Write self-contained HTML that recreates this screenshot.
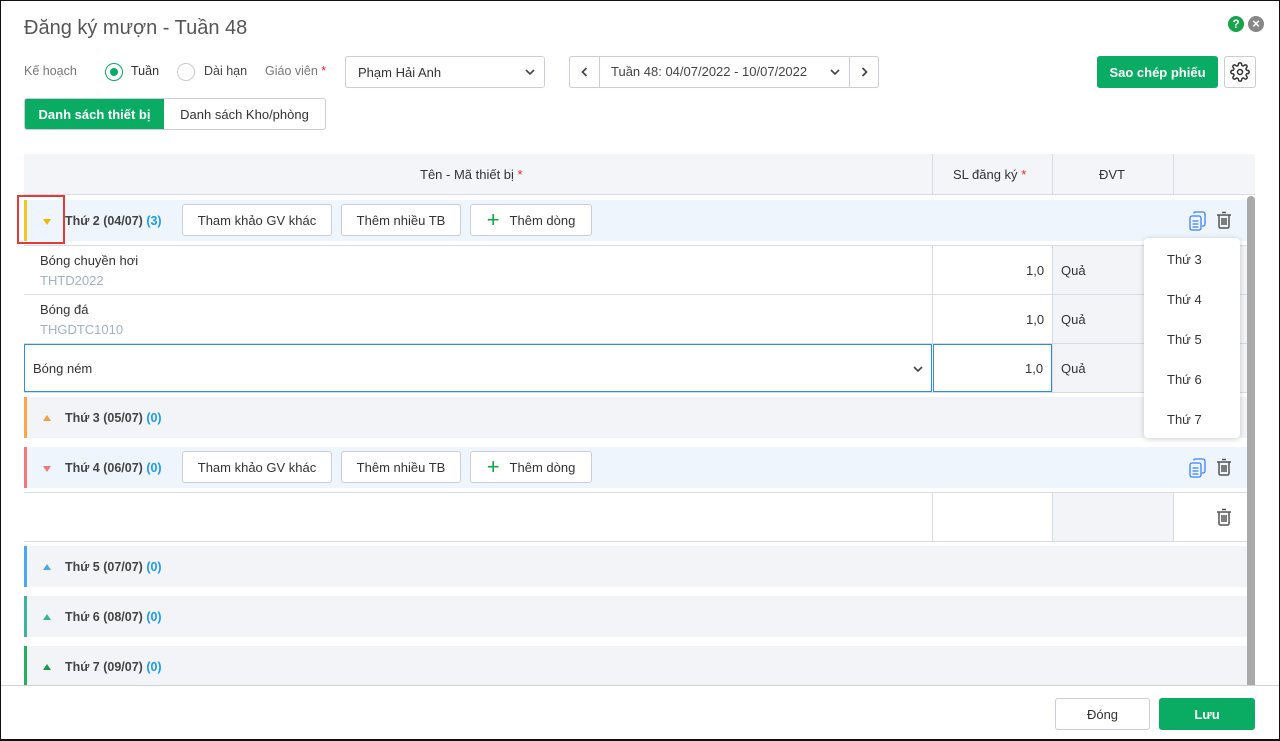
<!DOCTYPE html>
<html><head><meta charset="utf-8"><style>
*{box-sizing:border-box;margin:0;padding:0}
body{width:1280px;height:741px;overflow:hidden;background:#fff;font-family:"Liberation Sans",sans-serif;font-size:13px;color:#333;position:relative}
.frame{position:absolute;left:0;top:0;width:1280px;height:741px;border:1px solid #111;border-bottom-width:2px}
.a{position:absolute}
.btn{position:absolute;border:1px solid #ccd;border-radius:3px;background:#fff;display:flex;align-items:center;justify-content:center;color:#333}
.grp{position:absolute;left:24px;width:1223px;height:41px;display:flex;align-items:center}
.grp .t{font-weight:bold;color:#444;font-size:12.5px;margin-left:14px}
.grp .t b{color:#1e9be8;font-weight:bold}
.bar{position:absolute;left:0;top:0;bottom:0;width:3px}
.tri{width:0;height:0;border-left:4px solid transparent;border-right:4px solid transparent;margin-left:19px}
.hl{position:absolute;left:24px;width:1223px;height:1px;background:#d8dbe6}
.sm{font-size:12.5px}
</style></head><body>
<div class="frame"></div>
<div class="a" style="left:24px;top:17px;font-size:20px;color:#555">Đăng ký mượn - Tuần 48</div>
<div class="a" style="left:1228px;top:16px;width:16px;height:16px;border-radius:50%;background:#16a34a;color:#fff;font-size:12px;font-weight:bold;text-align:center;line-height:16px">?</div>
<div class="a" style="left:1248px;top:16px;width:16px;height:16px;border-radius:50%;background:#888;color:#fff;font-size:13px;font-weight:bold;text-align:center;line-height:16px">×</div>

<div class="a sm" style="left:24px;top:64px;color:#777">Kế hoạch</div>
<div class="a" style="left:105px;top:63px;width:18px;height:18px;border:1px solid #0aab62;border-radius:50%"><div style="margin:4px;width:8px;height:8px;border-radius:50%;background:#0aab62"></div></div>
<div class="a sm" style="left:131px;top:64px">Tuần</div>
<div class="a" style="left:177px;top:63px;width:18px;height:18px;border:1px solid #ccc;border-radius:50%"></div>
<div class="a sm" style="left:204px;top:64px;color:#444">Dài hạn</div>
<div class="a sm" style="left:265px;top:64px;color:#777">Giáo viên <span style="color:#e22">*</span></div>
<div class="btn" style="left:345px;top:56px;width:200px;height:32px;justify-content:flex-start;padding-left:12px">Phạm Hải Anh<svg style="position:absolute;right:9px;top:12px" width="10" height="7" viewBox="0 0 10 7"><path d="M1 1l4 4 4-4" fill="none" stroke="#444" stroke-width="1.6"/></svg></div>
<div class="btn" style="left:569px;top:56px;width:310px;height:32px"></div>
<div class="a" style="left:599px;top:57px;width:1px;height:30px;background:#ccd"></div>
<div class="a" style="left:849px;top:57px;width:1px;height:30px;background:#ccd"></div>
<svg class="a" style="left:581px;top:67px" width="7" height="10" viewBox="0 0 7 10"><path d="M5.5 1l-4 4 4 4" fill="none" stroke="#444" stroke-width="1.7"/></svg>
<svg class="a" style="left:861px;top:67px" width="7" height="10" viewBox="0 0 7 10"><path d="M1.5 1l4 4-4 4" fill="none" stroke="#444" stroke-width="1.7"/></svg>
<div class="a" style="left:611px;top:64px;color:#444">Tuần 48: 04/07/2022 - 10/07/2022</div>
<svg class="a" style="left:830px;top:69px" width="10" height="7" viewBox="0 0 10 7"><path d="M1 1l4 4 4-4" fill="none" stroke="#444" stroke-width="1.6"/></svg>
<div class="a" style="left:1097px;top:56px;width:121px;height:32px;background:#0aab62;border-radius:3px;color:#fff;font-weight:bold;display:flex;align-items:center;justify-content:center">Sao chép phiếu</div>
<div class="btn" style="left:1224px;top:56px;width:32px;height:32px"><svg width="20" height="20" viewBox="0 0 24 24" fill="none" stroke="#333" stroke-width="1.8"><circle cx="12" cy="12" r="3"/><path d="M19.4 15a1.7 1.7 0 0 0 .3 1.8l.1.1a2 2 0 1 1-2.8 2.8l-.1-.1a1.7 1.7 0 0 0-1.8-.3 1.7 1.7 0 0 0-1 1.5V21a2 2 0 1 1-4 0v-.1a1.7 1.7 0 0 0-1.100-1.500 1.7 1.7 0 0 0-1.8.3l-.1.1a2 2 0 1 1-2.800-2.800l.1-.1a1.7 1.7 0 0 0 .3-1.800 1.7 1.7 0 0 0-1.500-1H3a2 2 0 1 1 0-4h.1a1.7 1.7 0 0 0 1.5-1.100 1.7 1.7 0 0 0-.3-1.800l-.1-.1a2 2 0 1 1 2.800-2.800l.1.1a1.7 1.7 0 0 0 1.800.3H9a1.7 1.7 0 0 0 1-1.500V3a2 2 0 1 1 4 0v.1a1.7 1.7 0 0 0 1 1.500 1.7 1.7 0 0 0 1.800-.3l.1-.1a2 2 0 1 1 2.800 2.800l-.1.1a1.7 1.7 0 0 0-.3 1.800V9a1.7 1.7 0 0 0 1.500 1H21a2 2 0 1 1 0 4h-.1a1.7 1.7 0 0 0-1.500 1z"/></svg></div>

<div class="a" style="left:24px;top:98px;width:302px;height:32px;border:1px solid #ccd;border-radius:3px;overflow:hidden;display:flex">
<div style="width:139px;background:#0aab62;color:#fff;font-weight:bold;display:flex;align-items:center;justify-content:center">Danh sách thiết bị</div>
<div style="flex:1;display:flex;align-items:center;justify-content:center;color:#333">Danh sách Kho/phòng</div></div>

<div class="a" style="left:24px;top:154px;width:1231px;height:41px;background:#f3f5f9;border-bottom:1px solid #d8dbe6"></div>
<div class="a" style="left:932px;top:154px;width:1px;height:40px;background:#d8dbe6"></div>
<div class="a" style="left:1052px;top:154px;width:1px;height:40px;background:#d8dbe6"></div>
<div class="a" style="left:1173px;top:154px;width:1px;height:40px;background:#d8dbe6"></div>
<div class="a" style="left:420px;top:167px">Tên - Mã thiết bị <span style="color:#e22">*</span></div>
<div class="a" style="left:953px;top:167px">SL đăng ký <span style="color:#e22">*</span></div>
<div class="a" style="left:1099px;top:167px">ĐVT</div>
<div class="a" style="left:1247px;top:196px;width:8px;height:489px;background:#a9a9a9;border-radius:4px 4px 0 0"></div>

<div class="grp" style="top:200px;background:#eef5fc"><div class="bar" style="background:#f3c623"></div><div class="tri" style="border-top:6px solid #f5b400;margin-top:2px"></div><div class="t">Thứ 2 (04/07) <b>(3)</b></div></div>
<div class="a" style="left:17px;top:195px;width:48px;height:49px;border:2px solid #e53935"></div>
<div class="btn" style="left:182px;top:204px;width:150px;height:32px">Tham khảo GV khác</div>
<div class="btn" style="left:341px;top:204px;width:120px;height:32px">Thêm nhiều TB</div>
<div class="btn" style="left:470px;top:204px;width:122px;height:32px"><span style="color:#16a34a;font-size:22px;margin-right:10px;line-height:1">+</span>Thêm dòng</div>
<svg class="a" style="left:1189px;top:211px" width="18" height="20" viewBox="0 0 18 20" fill="none" stroke="#3b82f6" stroke-width="1.3"><rect x="1" y="5" width="11" height="14" rx="2"/><path d="M5 2.5V2a1 1 0 0 1 1-1h8a2 2 0 0 1 2 2v10a2 2 0 0 1-2 2h-1"/><path d="M3.5 10h6M3.5 13h6M3.5 16h6"/></svg>
<svg class="a" style="left:1216px;top:211px" width="16" height="18" viewBox="0 0 16 18" fill="none" stroke="#555" stroke-width="1.5"><path d="M1 4h14M6 1.5h4M3 4v11.5a1.5 1.5 0 0 0 1.5 1.5h7a1.5 1.5 0 0 0 1.5-1.5V4M6 7v7M8 7v7M10 7v7"/></svg>

<div class="hl" style="top:245px"></div>
<div class="a" style="left:932px;top:246px;width:1px;height:98px;background:#d8dbe6"></div>
<div class="a" style="left:1052px;top:246px;width:1px;height:146px;background:#d8dbe6"></div>
<div class="a" style="left:1053px;top:246px;width:194px;height:146px;background:#f3f4f8"></div>
<div class="a" style="left:40px;top:253px">Bóng chuyền hơi</div>
<div class="a" style="left:40px;top:273px;color:#9fb0c8">THTD2022</div>
<div class="a" style="left:1026px;top:263px">1,0</div><div class="a" style="left:1061px;top:263px">Quả</div>
<div class="hl" style="top:294px"></div>
<div class="a" style="left:40px;top:302px">Bóng đá</div>
<div class="a" style="left:40px;top:322px;color:#9fb0c8">THGDTC1010</div>
<div class="a" style="left:1026px;top:312px">1,0</div><div class="a" style="left:1061px;top:312px">Quả</div>
<div class="hl" style="top:343px"></div>
<div class="a" style="left:24px;top:344px;width:908px;height:48px;border:1px solid #2a8fe0"></div>
<div class="a" style="left:933px;top:344px;width:119px;height:48px;border:1px solid #2a8fe0"></div>
<div class="a" style="left:33px;top:361px">Bóng ném</div>
<svg class="a" style="left:913px;top:366px" width="10" height="7" viewBox="0 0 10 7"><path d="M1 1l4 4 4-4" fill="none" stroke="#444" stroke-width="1.6"/></svg>
<div class="a" style="left:1025px;top:361px">1,0</div><div class="a" style="left:1061px;top:361px">Quả</div>
<div class="hl" style="top:392px"></div>

<div class="grp" style="top:397px;background:#f3f4f8"><div class="bar" style="background:#f8a84a"></div><div class="tri" style="border-bottom:6px solid #f59e3b"></div><div class="t">Thứ 3 (05/07) <b>(0)</b></div></div>

<div class="grp" style="top:447px;background:#eef5fc"><div class="bar" style="background:#f07a7a"></div><div class="tri" style="border-top:6px solid #f07a7a;margin-top:2px"></div><div class="t">Thứ 4 (06/07) <b>(0)</b></div></div>
<div class="btn" style="left:182px;top:451px;width:150px;height:32px">Tham khảo GV khác</div>
<div class="btn" style="left:341px;top:451px;width:120px;height:32px">Thêm nhiều TB</div>
<div class="btn" style="left:470px;top:451px;width:122px;height:32px"><span style="color:#16a34a;font-size:22px;margin-right:10px;line-height:1">+</span>Thêm dòng</div>
<svg class="a" style="left:1189px;top:458px" width="18" height="20" viewBox="0 0 18 20" fill="none" stroke="#3b82f6" stroke-width="1.3"><rect x="1" y="5" width="11" height="14" rx="2"/><path d="M5 2.5V2a1 1 0 0 1 1-1h8a2 2 0 0 1 2 2v10a2 2 0 0 1-2 2h-1"/><path d="M3.5 10h6M3.5 13h6M3.5 16h6"/></svg>
<svg class="a" style="left:1216px;top:458px" width="16" height="18" viewBox="0 0 16 18" fill="none" stroke="#555" stroke-width="1.5"><path d="M1 4h14M6 1.5h4M3 4v11.5a1.5 1.5 0 0 0 1.5 1.5h7a1.5 1.5 0 0 0 1.5-1.5V4M6 7v7M8 7v7M10 7v7"/></svg>

<div class="hl" style="top:492px"></div>
<div class="a" style="left:1053px;top:493px;width:120px;height:48px;background:#f3f4f8"></div>
<div class="a" style="left:932px;top:493px;width:1px;height:48px;background:#d8dbe6"></div>
<div class="a" style="left:1052px;top:493px;width:1px;height:48px;background:#d8dbe6"></div>
<div class="a" style="left:1173px;top:493px;width:1px;height:48px;background:#d8dbe6"></div>
<svg class="a" style="left:1216px;top:508px" width="16" height="18" viewBox="0 0 16 18" fill="none" stroke="#555" stroke-width="1.5"><path d="M1 4h14M6 1.5h4M3 4v11.5a1.5 1.5 0 0 0 1.5 1.5h7a1.5 1.5 0 0 0 1.5-1.5V4M6 7v7M8 7v7M10 7v7"/></svg>
<div class="hl" style="top:541px"></div>

<div class="grp" style="top:546px;background:#f3f4f8"><div class="bar" style="background:#4aa8ec"></div><div class="tri" style="border-bottom:6px solid #4aa8ec"></div><div class="t">Thứ 5 (07/07) <b>(0)</b></div></div>
<div class="grp" style="top:596px;background:#f3f4f8"><div class="bar" style="background:#3db39a"></div><div class="tri" style="border-bottom:6px solid #3db39a"></div><div class="t">Thứ 6 (08/07) <b>(0)</b></div></div>
<div class="grp" style="top:646px;background:#f3f4f8"><div class="bar" style="background:#22b060"></div><div class="tri" style="border-bottom:6px solid #1a9a50"></div><div class="t">Thứ 7 (09/07) <b>(0)</b></div></div>

<div class="a" style="left:1144px;top:238px;width:96px;height:200px;background:#fff;border-radius:4px;box-shadow:0 1px 6px rgba(0,0,0,.2)">
<div class="a" style="left:23px;top:14px">Thứ 3</div>
<div class="a" style="left:23px;top:54px">Thứ 4</div>
<div class="a" style="left:23px;top:94px">Thứ 5</div>
<div class="a" style="left:23px;top:134px">Thứ 6</div>
<div class="a" style="left:23px;top:174px">Thứ 7</div>
</div>

<div class="a" style="left:1px;top:685px;width:1278px;height:54px;background:#fff;border-top:1px solid #d0d0d0"></div>
<div class="btn" style="left:1055px;top:698px;width:95px;height:32px">Đóng</div>
<div class="a" style="left:1159px;top:698px;width:96px;height:32px;background:#0aab62;border-radius:3px;color:#fff;font-weight:bold;display:flex;align-items:center;justify-content:center">Lưu</div>
</body></html>
